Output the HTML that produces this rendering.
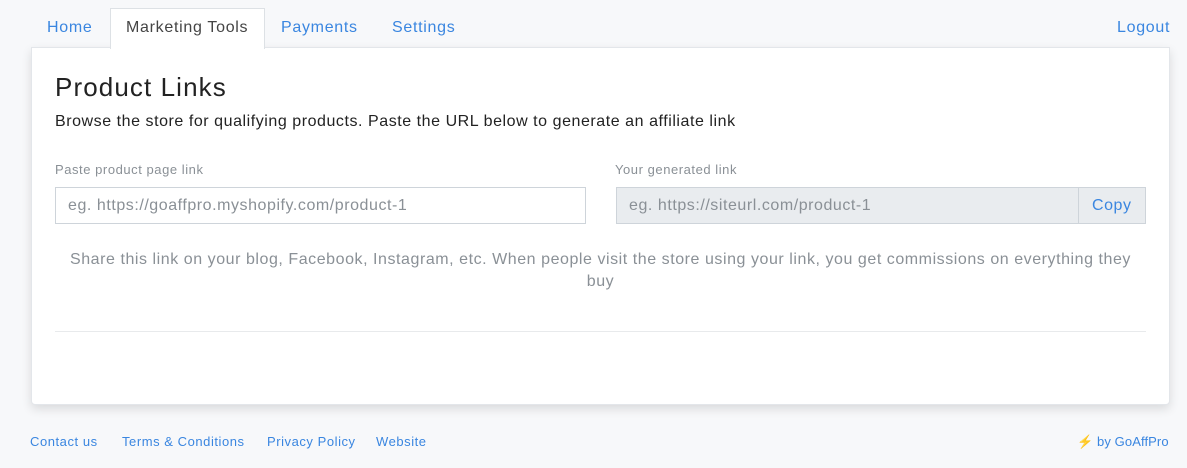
<!DOCTYPE html>
<html><head><style>
*{margin:0;padding:0;box-sizing:border-box}
body{width:1187px;height:468px;background:#f7f8fa;font-family:"Liberation Sans",sans-serif;position:relative;overflow:hidden;letter-spacing:0.55px}
.a{position:absolute;white-space:nowrap}
.blue{color:#3a86e0}
.tab{font-size:16px;top:19px;letter-spacing:0.7px}
.card{position:absolute;left:31px;top:47px;width:1139px;height:358px;background:#fff;border:1px solid #e3e6ea;border-radius:0 0 4px 4px;box-shadow:0 4px 10px rgba(0,0,0,.12)}
.act{position:absolute;left:110px;top:8px;width:155px;height:41px;background:#fff;border:1px solid #dde1e5;border-bottom:none;z-index:2}
.inp{position:absolute;height:37px;border:1px solid #ced4da;font-size:16px;color:#8a9096;padding:9px 12px 7px}
.lbl{font-size:13px;color:#8a9096;top:162px}
.f{font-size:13px;top:434px}
</style></head><body>
<div class="card"></div>
<div class="act"></div>
<div class="a tab blue" style="left:47px">Home</div>
<div class="a tab" style="left:126px;color:#444;z-index:3">Marketing Tools</div>
<div class="a tab blue" style="left:281px">Payments</div>
<div class="a tab blue" style="left:392px">Settings</div>
<div class="a tab blue" style="left:1117px">Logout</div>
<div class="a" style="left:55px;top:72px;font-size:26px;color:#222;letter-spacing:1.1px">Product Links</div>
<div class="a" style="left:55px;top:113px;font-size:16px;color:#222">Browse the store for qualifying products. Paste the URL below to generate an affiliate link</div>
<div class="a lbl" style="left:55px">Paste product page link</div>
<div class="a lbl" style="left:615px">Your generated link</div>
<div class="inp" style="left:55px;top:187px;width:531px">eg. https://goaffpro.myshopify.com/product-1</div>
<div class="inp" style="left:616px;top:187px;width:463px;background:#e9ecef">eg. https://siteurl.com/product-1</div>
<div class="inp" style="left:1078px;top:187px;width:68px;background:#e9ecef;padding:9px 13px 7px;color:#3a86e0">Copy</div>
<div class="a" style="left:55px;width:1091px;top:249px;font-size:16px;color:#8a9096;text-align:center;line-height:22px">Share this link on your blog, Facebook, Instagram, etc. When people visit the store using your link, you get commissions on everything they<br>buy</div>
<div class="a" style="left:55px;top:331px;width:1091px;height:1px;background:#e8eaec"></div>
<div class="a f blue" style="left:30px">Contact us</div>
<div class="a f blue" style="left:122px">Terms &amp; Conditions</div>
<div class="a f blue" style="left:267px">Privacy Policy</div>
<div class="a f blue" style="left:376px">Website</div>
<div class="a f blue" style="left:1077px;letter-spacing:0.1px"><span style="color:#f5a623">⚡</span> by GoAffPro</div>
</body></html>
